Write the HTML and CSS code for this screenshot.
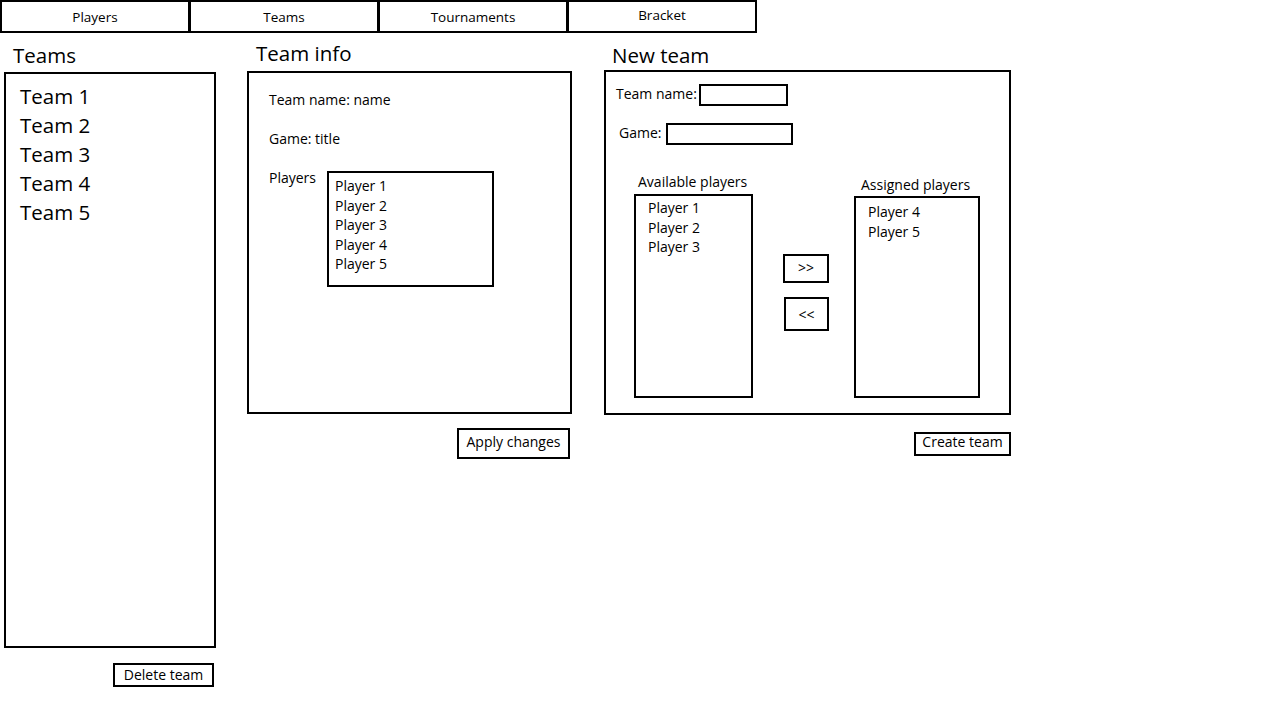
FILE: index.html
```html
<!DOCTYPE html>
<html lang="en">
<head>
<meta charset="utf-8">
<title>Teams</title>
<link rel="stylesheet" href="styles.css">
</head>
<body>
<nav class="tabs">
  <div class="tab">Players</div>
  <div class="tab">Teams</div>
  <div class="tab">Tournaments</div>
  <div class="tab tab-raised">Bracket</div>
</nav>
<main class="layout">
  <section class="col col-teams">
    <h2 class="heading heading-teams">Teams</h2>
    <ul class="box team-list">
      <li>Team 1</li>
      <li>Team 2</li>
      <li>Team 3</li>
      <li>Team 4</li>
      <li>Team 5</li>
    </ul>
    <button class="btn btn-delete">Delete team</button>
  </section>

  <section class="col col-info">
    <h2 class="heading heading-info">Team info</h2>
    <div class="box info-box">
      <div class="info-line">Team name: name</div>
      <div class="info-line">Game: title</div>
      <div class="info-players">
        <div class="info-label">Players</div>
        <ul class="box small-list info-list">
          <li>Player 1</li>
          <li>Player 2</li>
          <li>Player 3</li>
          <li>Player 4</li>
          <li>Player 5</li>
        </ul>
      </div>
    </div>
    <button class="btn btn-apply">Apply changes</button>
  </section>

  <section class="col col-new">
    <h2 class="heading heading-new">New team</h2>
    <div class="box new-box">
      <div class="field field-name">
        <span class="field-label">Team name:</span>
        <input class="input input-name" type="text">
      </div>
      <div class="field field-game">
        <span class="field-label">Game:</span>
        <input class="input input-game" type="text">
      </div>
      <div class="pickers">
        <div class="pick pick-available">
          <div class="pick-label">Available players</div>
          <ul class="box small-list pick-list-available">
            <li>Player 1</li>
            <li>Player 2</li>
            <li>Player 3</li>
          </ul>
        </div>
        <div class="arrows">
          <button class="btn btn-right">&gt;&gt;</button>
          <button class="btn btn-left">&lt;&lt;</button>
        </div>
        <div class="pick pick-assigned">
          <div class="pick-label">Assigned players</div>
          <ul class="box small-list pick-list-assigned">
            <li>Player 4</li>
            <li>Player 5</li>
          </ul>
        </div>
      </div>
    </div>
    <button class="btn btn-create">Create team</button>
  </section>
</main>
</body>
</html>
```

FILE: styles.css
```css
* { box-sizing: border-box; }

body {
  margin: 0;
  background: #fff;
  color: #000;
  font-family: "Open Sans", "Noto Sans", sans-serif;
  font-size: 14px;
}

.tabs {
  display: flex;
}

.tab {
  width: 190px;
  height: 33px;
  margin-right: -1px;
  border: 2px solid #000;
  display: flex;
  align-items: center;
  justify-content: center;
  font-size: 13.5px;
}

.tab-raised {
  padding-bottom: 4px;
}

.layout {
  display: flex;
  align-items: flex-start;
}

.col {
  display: flex;
  flex-direction: column;
}

.heading {
  margin: 0;
  font-weight: normal;
  font-size: 20.5px;
  line-height: 26px;
}

.box {
  border: 2px solid #000;
  margin: 0;
}

ul.box {
  list-style: none;
}

.btn {
  border: 2px solid #000;
  background: #fff;
  color: #000;
  font-family: inherit;
  font-size: 14px;
  padding: 0;
  display: flex;
  align-items: center;
  justify-content: center;
}

/* Teams column */
.col-teams {
  margin-left: 4px;
  width: 212px;
}

.heading-teams {
  padding: 9px 0 4px 9px;
}

.team-list {
  height: 576px;
  padding: 8px 14px;
  font-size: 20.5px;
  line-height: 29px;
}

.btn-delete {
  align-self: flex-end;
  margin: 15px 2px 0 0;
  width: 101px;
  height: 24px;
  padding-bottom: 2px;
}

/* Team info column */
.col-info {
  margin-left: 31px;
  width: 325px;
}

.heading-info {
  padding: 7px 0 5px 9px;
}

.info-box {
  height: 343px;
  padding: 17px 20px;
}

.info-line {
  line-height: 20px;
  margin-bottom: 19px;
}

.info-players {
  display: flex;
  align-items: flex-start;
}

.info-label {
  width: 58px;
  line-height: 20px;
}

.small-list {
  line-height: 19.5px;
}

.info-list {
  margin-top: 3px;
  width: 167px;
  height: 116px;
  padding: 3px 6px;
}

.btn-apply {
  align-self: flex-end;
  margin: 14px 2px 0 0;
  width: 113px;
  height: 31px;
  padding-bottom: 5px;
}

/* New team column */
.col-new {
  margin-left: 32px;
  width: 407px;
}

.heading-new {
  padding: 9px 0 2px 8px;
}

.new-box {
  height: 345px;
}

.field {
  display: flex;
  align-items: center;
  height: 22px;
}

.field-label {
  padding-bottom: 3px;
}

.field-name {
  margin: 12px 0 0 10px;
  gap: 2px;
}

.field-game {
  margin: 17px 0 0 13px;
  gap: 5px;
}

.input {
  border: 2px solid #000;
  background: #fff;
  height: 22px;
  padding: 0;
  margin: 0;
}

.input-name { width: 89px; }
.input-game { width: 127px; }

.pickers {
  display: flex;
  align-items: flex-start;
  margin-top: 28px;
}

.pick {
  display: flex;
  flex-direction: column;
}

.pick-label {
  line-height: 18px;
}

.pick-available {
  margin-left: 28px;
}

.pick-available .pick-label {
  margin-left: 4px;
}

.pick-list-available {
  margin-top: 3px;
  width: 119px;
  height: 204px;
  padding: 2px 12px;
}

.arrows {
  display: flex;
  flex-direction: column;
  margin: 81px 0 0 30px;
}

.btn-right {
  width: 46px;
  height: 29px;
  padding-bottom: 3px;
}

.btn-left {
  margin: 14px 0 0 1px;
  width: 45px;
  height: 34px;
}

.pick-assigned {
  margin: 3px 0 0 25px;
}

.pick-assigned .pick-label {
  margin-left: 7px;
}

.pick-list-assigned {
  margin-top: 2px;
  width: 126px;
  height: 202px;
  padding: 4px 12px;
}

.btn-create {
  align-self: flex-end;
  margin-top: 17px;
  width: 97px;
  height: 24px;
  padding-bottom: 5px;
}
```
